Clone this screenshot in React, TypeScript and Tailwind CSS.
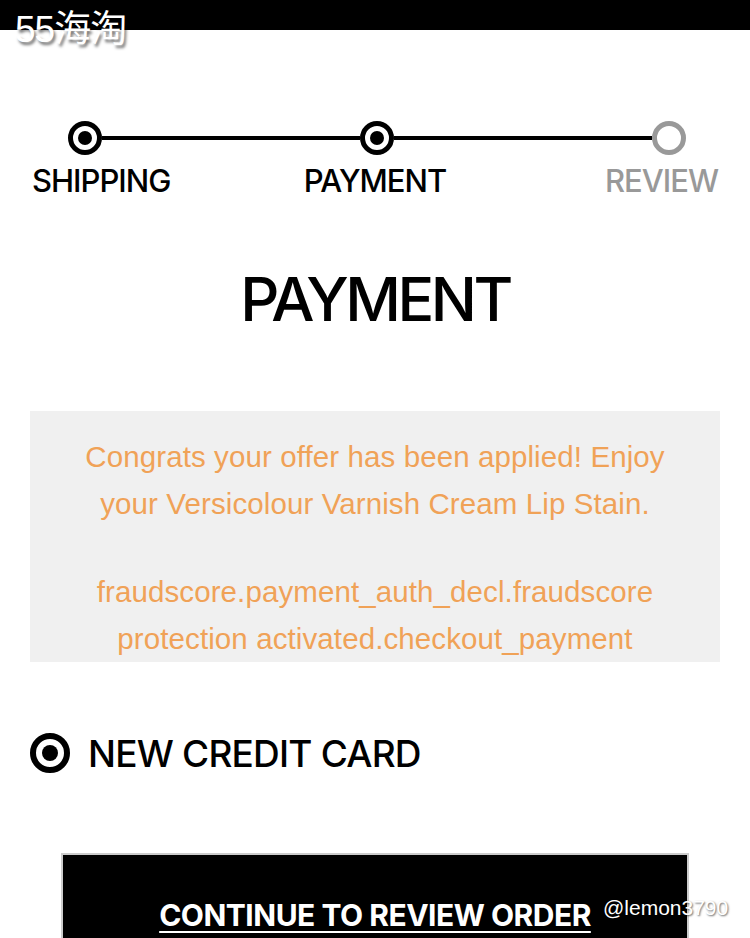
export default function App() {
  const heading = { fontFamily: "Inter, 'Noto Sans', sans-serif" };
  const body = { fontFamily: "'Liberation Sans', Arial, sans-serif" };

  return (
    <div className="relative w-[750px] h-[938px] overflow-hidden bg-white text-black" style={heading}>
      {/* status strip + watermark */}
      <div className="h-[30px] bg-black" />
      <div
        className="absolute left-[15px] top-[11px] text-[37px] leading-none font-normal text-white tracking-[-1px]"
        style={{ fontFamily: "'Liberation Sans', 'Noto Sans CJK SC', sans-serif", textShadow: "2px 3px 3px rgba(0,0,0,0.55)" }}
      >
        55海淘
      </div>

      {/* stepper */}
      <div className="mt-[91px] flex items-center pl-[68px] pr-[64px]">
        <StepDot active />
        <div className="h-[4px] flex-1 bg-black" />
        <StepDot active />
        <div className="h-[4px] flex-1 bg-black" />
        <StepDot />
      </div>
      <div className="mt-[10px] grid grid-cols-3 px-[32px] text-[31px] leading-none font-medium tracking-[-1px]">
        <span className="justify-self-start">SHIPPING</span>
        <span className="justify-self-center">PAYMENT</span>
        <span className="justify-self-end text-[#999999]">REVIEW</span>
      </div>

      <h1 className="mt-[73px] text-center text-[61px] leading-none font-medium tracking-[-3.5px]">PAYMENT</h1>

      {/* offer notice */}
      <div
        className="mx-[30px] mt-[81px] h-[251px] bg-[#f0f0f0] pt-[22px] text-center text-[29.5px] leading-[47px] text-[#f0a257] tracking-[0.1px]"
        style={body}
      >
        <p>Congrats your offer has been applied! Enjoy</p>
        <p>your Versicolour Varnish Cream Lip Stain.</p>
        <p className="mt-[41px]">fraudscore.payment_auth_decl.fraudscore</p>
        <p>protection activated.checkout_payment</p>
      </div>

      {/* payment option */}
      <div className="mt-[71px] flex items-center gap-[18px] pl-[30px]">
        <div className="flex h-[40px] w-[40px] items-center justify-center rounded-full border-[6px] border-black">
          <div className="h-[16px] w-[16px] rounded-full bg-black" />
        </div>
        <span className="text-[37px] leading-none font-medium tracking-[-0.8px]">NEW CREDIT CARD</span>
      </div>

      {/* continue button */}
      <div className="mx-[61px] mt-[80px] h-[120px] border-2 border-[#cccccc] bg-black pt-[45px] text-center">
        <span className="text-[30px] font-bold leading-none text-white underline decoration-2 underline-offset-[5px] tracking-[-0.5px]">
          CONTINUE TO REVIEW ORDER
        </span>
      </div>

      <div
        className="absolute left-[603px] top-[897px] text-[21px] leading-none text-white"
        style={{ fontFamily: "'Liberation Sans', sans-serif", textShadow: "1px 1px 2px rgba(0,0,0,0.6)" }}
      >
        @lemon3790
      </div>
    </div>
  );
}

function StepDot({ active }: { active?: boolean }) {
  if (!active) {
    return <div className="h-[34px] w-[34px] rounded-full border-[5px] border-[#999999] bg-white" />;
  }
  return (
    <div className="flex h-[34px] w-[34px] items-center justify-center rounded-full border-[5px] border-black bg-white">
      <div className="h-[14px] w-[14px] rounded-full bg-black" />
    </div>
  );
}
